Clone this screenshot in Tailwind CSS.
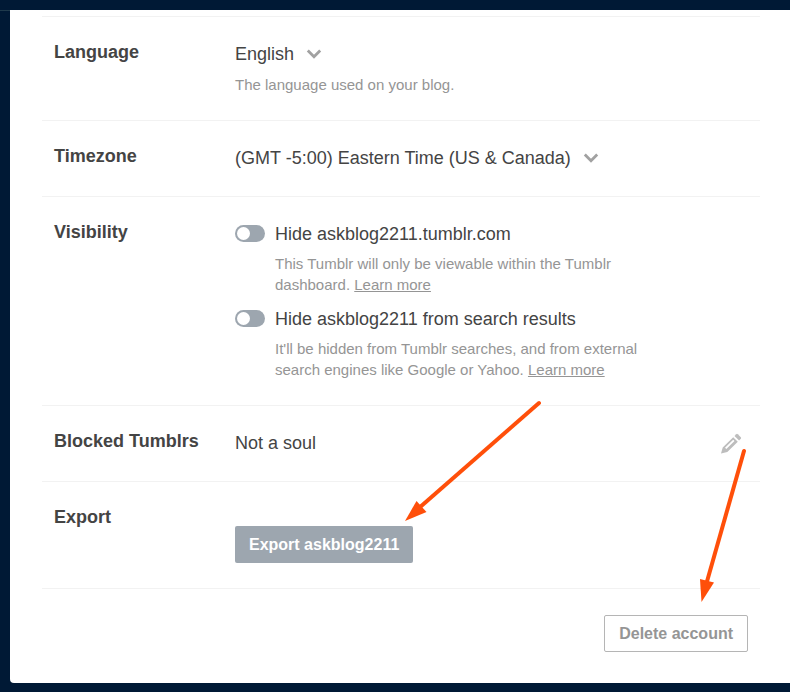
<!DOCTYPE html>
<html lang="en">
<head>
    <meta charset="UTF-8">
    <meta name="viewport" content="width=device-width, initial-scale=1.0">
    <title>Blog settings</title>
    <script src="https://cdn.jsdelivr.net/npm/@tailwindcss/browser@4"></script>
</head>
<body class="min-h-screen bg-[#001935] font-['Liberation_Sans',Arial,sans-serif] text-lg/7 text-[#444]">
<header class="h-[11px] border-b border-[#1f3a4c]"></header>
<main class="relative -mt-px ml-[10px] rounded-bl bg-white pt-1.5 pr-[30px] pb-[31px] pl-8">
    <section class="flex border-t border-[#f2f2f2] px-3">
        <h2 class="w-[181px] shrink-0 pt-[21px] font-bold"><label for="language">Language</label></h2>
        <div class="flex-1 pt-[23px] pb-[25px]">
            <div class="flex items-center gap-3">
                <select id="language" class="h-7 appearance-none field-sizing-content bg-transparent">
                    <option>English</option>
                </select>
                <svg class="pointer-events-none h-2.5 w-4" viewBox="0 0 16 10" fill="none" stroke="#a1a1a1" stroke-width="2.800"><path d="M1.800 1.500 8 7.700l6.200-6.200"/></svg>
            </div>
            <p class="mt-1.5 text-[15px]/[21px] text-[#959595]">The language used on your blog.</p>
        </div>
    </section>

    <section class="flex border-t border-[#f2f2f2] px-3">
        <h2 class="w-[181px] shrink-0 pt-[21px] font-bold"><label for="timezone">Timezone</label></h2>
        <div class="flex flex-1 items-center gap-3 pt-[23px] pb-6">
            <select id="timezone" class="h-7 appearance-none field-sizing-content bg-transparent">
                <option>(GMT -5:00) Eastern Time (US &amp; Canada)</option>
            </select>
            <svg class="pointer-events-none h-2.5 w-4" viewBox="0 0 16 10" fill="none" stroke="#a1a1a1" stroke-width="2.800"><path d="M1.800 1.500 8 7.700l6.200-6.200"/></svg>
        </div>
    </section>

    <section class="flex border-t border-[#f2f2f2] px-3">
        <h2 class="w-[181px] shrink-0 pt-[21px] font-bold">Visibility</h2>
        <div class="flex flex-1 flex-col gap-2.5 pt-[23px] pb-[25px]">
            <div>
                <div class="flex items-start gap-2.5">
                    <input id="hide-blog" type="checkbox" class="mt-[5px] flex h-[17px] w-[30px] appearance-none items-center rounded-full bg-[#9da6af] px-0.5 before:size-[13px] before:rounded-full before:bg-white checked:justify-end checked:bg-[#529ecc]">
                    <label for="hide-blog">Hide askblog2211.tumblr.com</label>
                </div>
                <p class="mt-[5px] ml-10 max-w-[380px] text-[15px]/[21px] text-[#959595]">This Tumblr will only be viewable within the Tumblr dashboard. <a href="#" class="underline">Learn more</a></p>
            </div>
            <div>
                <div class="flex items-start gap-2.5">
                    <input id="hide-search" type="checkbox" class="mt-[5px] flex h-[17px] w-[30px] appearance-none items-center rounded-full bg-[#9da6af] px-0.5 before:size-[13px] before:rounded-full before:bg-white checked:justify-end checked:bg-[#529ecc]">
                    <label for="hide-search">Hide askblog2211 from search results</label>
                </div>
                <p class="mt-[5px] ml-10 max-w-[380px] text-[15px]/[21px] text-[#959595]">It'll be hidden from Tumblr searches, and from external search engines like Google or Yahoo. <a href="#" class="underline">Learn more</a></p>
            </div>
        </div>
    </section>

    <section class="flex border-t border-[#f2f2f2] px-3">
        <h2 class="w-[181px] shrink-0 pt-[21px] font-bold">Blocked Tumblrs</h2>
        <div class="flex flex-1 items-center justify-between pt-[23px] pr-1.5 pb-6">
            <span>Not a soul</span>
            <button type="button" aria-label="Edit blocked Tumblrs">
                <svg class="size-[21px]" viewBox="0 0 21 21" fill="#bdbdbd"><path fill-rule="evenodd" d="M0 20.500 1.700 14.500 12.200 4.200l4.600 4.600L6.300 19zM4 14.800l1.300 1.300 8.200-8-1.300-1.300z"/><path d="m13.500 2.900 1.700-1.700q.8-.7 1.600 0l3 3q.7.800 0 1.600l-1.700 1.700z"/></svg>
            </button>
        </div>
    </section>

    <section class="flex border-t border-[#f2f2f2] px-3">
        <h2 class="w-[181px] shrink-0 pt-[21px] font-bold">Export</h2>
        <div class="flex-1 pt-11 pb-[25px]">
            <button type="button" class="block h-[37px] rounded-xs bg-[#9da6af] px-3.5 text-base font-bold text-white">Export askblog2211</button>
        </div>
    </section>

    <div class="flex justify-end border-t border-[#f2f2f2] px-3 pt-[26px]">
        <button type="button" class="h-[37px] rounded-xs border border-[#b5b5b5] px-3.5 text-base font-bold text-[#959595]">Delete account</button>
    </div>

    <!-- arrows pointing at the export and delete buttons -->
    <svg class="pointer-events-none absolute top-[390px] left-[394px] h-[122px] w-[138px]" viewBox="0 0 138 122" fill="#ff4f0a"><path d="M135 3 15 108" stroke="#ff4f0a" stroke-width="4" stroke-linecap="round"/><path d="M1 121 12.500 101l10 11z"/></svg>
    <svg class="pointer-events-none absolute top-[438px] left-[688px] h-[154px] w-[50px]" viewBox="0 0 50 154" fill="#ff4f0a"><path d="M46 3 8 137" stroke="#ff4f0a" stroke-width="4" stroke-linecap="round"/><path d="m3.500 154-1.500-23 14 3.500z"/></svg>
</main>
</body>
</html>
